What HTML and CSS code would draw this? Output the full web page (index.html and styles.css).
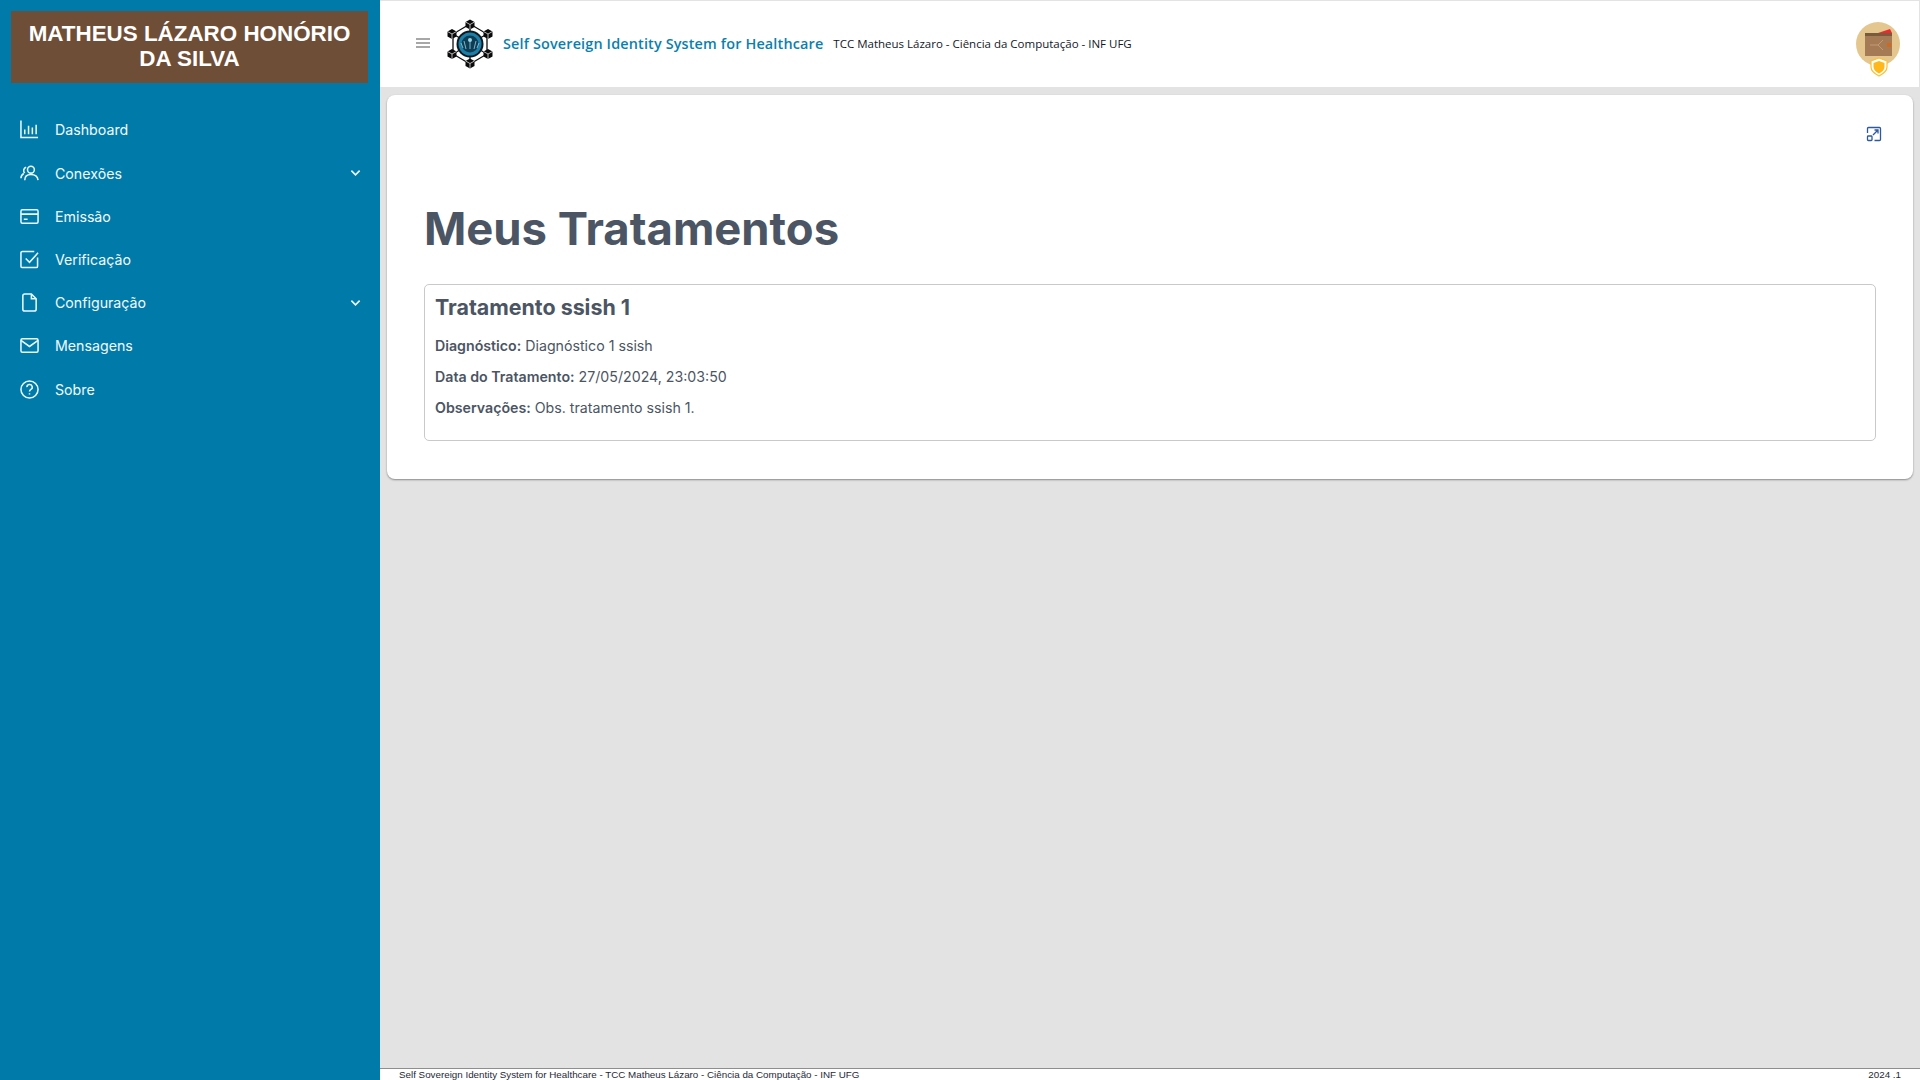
FILE: index.html
```html
<!DOCTYPE html>
<html lang="pt-BR">
<head>
<meta charset="utf-8">
<title>Meus Tratamentos</title>
<link rel="stylesheet" href="styles.css">
</head>
<body>
<div class="app">
  <aside class="sidebar">
    <div class="brand">MATHEUS LÁZARO HONÓRIO DA SILVA</div>
    <nav class="menu">
      <a class="item">
        <svg class="ico" viewBox="0 0 20 20"><path d="M1 .5v18h18M5 15v-5M9 15V6M13 15v-7M17 15V5"/></svg>
        <span class="label">Dashboard</span>
      </a>
      <a class="item">
        <svg class="ico" viewBox="0 0 20 20"><circle cx="11.5" cy="6" r="3.6"/><path d="M5 17c0-4 2.500-6 6.500-6s7 2 7.500 6M6.500 3.500A3.500 3.500 0 0 0 5 9.500M1 15c0-2.500 1-4 3-5"/></svg>
        <span class="label">Conexões</span>
        <svg class="chev" viewBox="0 0 12 8"><path d="M1.500 1.500 6 6l4.500-4.500"/></svg>
      </a>
      <a class="item">
        <svg class="ico" viewBox="0 0 20 20"><rect x="1" y="3" width="18" height="14" rx="1.500"/><path d="M1 7.500h18M4 13h4"/></svg>
        <span class="label">Emissão</span>
      </a>
      <a class="item">
        <svg class="ico" viewBox="0 0 20 20"><path d="M18.500 8v9a1.500 1.500 0 0 1-1.500 1.500H2.500A1.500 1.500 0 0 1 1 17V3a1.500 1.500 0 0 1 1.500-1.500H15M6 9l4 4 9-10"/></svg>
        <span class="label">Verificação</span>
      </a>
      <a class="item">
        <svg class="ico" viewBox="0 0 20 20"><path d="M3 3a2 2 0 0 1 2-2h7l5 5v11a2 2 0 0 1-2 2H5a2 2 0 0 1-2-2zM12 1v5h5"/></svg>
        <span class="label">Configuração</span>
        <svg class="chev" viewBox="0 0 12 8"><path d="M1.500 1.500 6 6l4.500-4.500"/></svg>
      </a>
      <a class="item">
        <svg class="ico" viewBox="0 0 20 20"><rect x="1" y="3" width="18" height="14" rx="1.500"/><path d="m1 4.500 9 6.500 9-6.500"/></svg>
        <span class="label">Mensagens</span>
      </a>
      <a class="item">
        <svg class="ico" viewBox="0 0 20 20"><circle cx="10" cy="10" r="9"/><path d="M7.300 7.500a2.800 2.800 0 1 1 4.200 2.400c-1 .6-1.500 1.100-1.500 2.100M10 14v1.300"/></svg>
        <span class="label">Sobre</span>
      </a>
    </nav>
  </aside>
  <div class="main">
    <header class="topbar">
      <svg class="burger" viewBox="0 0 14 10"><path d="M0 1h14M0 5h14M0 9h14"/></svg>
      <svg class="logo" viewBox="0 0 48 50">
        <path class="net" d="M24 5 41 15V35L24 45 7 35V15Z"/>
        <path class="net" d="M24 5V12M41 15 35 18.500M41 35 35 31.500M24 45V38M7 35 13 31.500M7 15 13 18.500"/>
        <g class="nodes">
          <path d="M24 .5 28.500 3V8L24 10.500 19.500 8V3Z"/>
          <path d="M42 10 46.500 12.500V17.500L42 20 37.500 17.500V12.500Z"/>
          <path d="M42 30 46.500 32.500V37.500L42 40 37.500 37.500V32.500Z"/>
          <path d="M24 39.500 28.500 42V47L24 49.500 19.500 47V42Z"/>
          <path d="M6 30 10.500 32.500V37.500L6 40 1.500 37.500V32.500Z"/>
          <path d="M6 10 10.500 12.500V17.500L6 20 1.500 17.500V12.500Z"/>
        </g>
        <path class="cube" d="M19.500 3 24 5.500 28.500 3M24 5.500V10M37.500 12.500 42 15 46.500 12.500M42 15V20M37.500 32.500 42 35 46.500 32.500M42 35V40M19.500 42 24 44.500 28.500 42M24 44.500V49M1.500 32.500 6 35 10.500 32.500M6 35V40M1.500 12.500 6 15 10.500 12.500M6 15V20"/>
        <circle cx="24" cy="25" r="13.500" fill="#10181f"/>
        <circle cx="24" cy="25" r="11.500" fill="#1c7fa8"/>
        <circle cx="24" cy="25" r="8.500" fill="#0d3d55"/>
        <path class="rays" d="M24 30V20M20 30l-2-8M28 30l2-8M17 29l-2-5M31 29l2-5"/>
        <circle cx="24" cy="21" r="2" fill="#9ad3e6"/>
      </svg>
      <span class="app-name">Self Sovereign Identity System for Healthcare</span>
      <span class="app-sub">TCC Matheus Lázaro - Ciência da Computação - INF UFG</span>
      <span class="avatar">
        <svg viewBox="0 0 46 56">
          <circle cx="23" cy="23" r="22" fill="#e3c78f"/>
          <path d="M23 12 35 8 37 12Z" fill="#f0282d"/>
          <rect x="10" y="12" width="27" height="23" fill="#a47b55"/>
          <rect x="10" y="12" width="27" height="3" fill="#7a5a3c"/>
          <rect x="32" y="22" width="4" height="4" fill="#d0681e"/>
          <path d="M15 24h8l5-5M23 24l5 5" stroke="#c19a72" fill="none"/>
          <path d="M24 37 32 40V46C32 50 28 53 24 55 20 53 16 50 16 46V40Z" fill="#fff" stroke="#ffc02e" stroke-width="1.200"/>
          <path d="M24 40 29.500 42V46C29.500 49 27 51 24 52.500 21 51 18.500 49 18.500 46V42Z" fill="#ffb81c"/>
        </svg>
      </span>
    </header>
    <main class="content">
      <section class="card">
        <div class="card-tools">
          <svg class="expand" viewBox="0 0 16 16"><path d="M1.500 7V2.500a1 1 0 0 1 1-1h11a1 1 0 0 1 1 1v11a1 1 0 0 1-1 1H8.500"/><rect x="1.500" y="10" width="4.500" height="4.500" rx=".8"/><path d="m7 9 5-5M8.500 4H12v3.500"/></svg>
        </div>
        <h1 class="title">Meus Tratamentos</h1>
        <article class="treatment">
          <h2 class="treatment-title">Tratamento ssish 1</h2>
          <p class="line"><strong>Diagnóstico:</strong> Diagnóstico 1 ssish</p>
          <p class="line"><strong>Data do Tratamento:</strong> 27/05/2024, 23:03:50</p>
          <p class="line"><strong>Observações:</strong> Obs. tratamento ssish 1.</p>
        </article>
      </section>
    </main>
    <footer class="footer">
      <span>Self Sovereign Identity System for Healthcare - TCC Matheus Lázaro - Ciência da Computação - INF UFG</span>
      <span>2024 .1</span>
    </footer>
  </div>
</div>
</body>
</html>
```
FILE: styles.css
```css
* { box-sizing: border-box; }
html, body { margin: 0; height: 100%; }
body { font-family: Inter, "Liberation Sans", sans-serif; background: #e3e3e3; color: #4b5563; overflow: hidden; }
.app { display: flex; height: 1080px; }

.sidebar { width: 380px; flex: none; background: #007aa9; padding: 11px 12px 0 11px; color: #f2fbff; }
.brand { height: 72px; background: #6f4e37; color: #fff; font: 700 22.400px/25px "Liberation Sans", sans-serif; text-align: center; padding: 10px 8px 0; }
.menu { display: flex; flex-direction: column; margin-top: 25.300px; }
.item { display: flex; align-items: center; height: 43.200px; padding: 0 7px 0 9px; font-size: 14.200px; }
.ico { width: 19px; height: 19px; flex: none; fill: none; stroke: #eafaff; stroke-width: 1.600; }
.label { margin-left: 16px; flex: 1; }
.chev { width: 11px; height: 8px; fill: none; stroke: #f2fbff; stroke-width: 1.800; }

.main { flex: 1; min-width: 0; display: flex; flex-direction: column; }
.topbar { height: 86px; margin: 1px 1px 0 0; background: #fff; display: flex; align-items: center; padding: 0 18px 0 36px; flex: none; }
.burger { width: 14px; height: 10px; margin-bottom: 2px; fill: none; stroke: #8a8a8a; stroke-width: 1.300; }
.logo { width: 48px; height: 50px; margin-left: 16px; }
.net { fill: none; stroke: #111; stroke-width: 1.300; }
.nodes { fill: #0a0a0a; }
.cube { fill: none; stroke: #fff; stroke-width: .7; }
.rays { fill: none; stroke: #9ad3e6; stroke-width: .8; }
.app-name { margin: 0 0 2px 9px; font: 600 14.400px "Open Sans", sans-serif; letter-spacing: .16px; color: #0a7fae; }
.app-sub { margin: 0 0 2px 10px; font: 400 11.500px "Open Sans", sans-serif; color: #111827; }
.avatar { margin-left: auto; width: 46px; height: 56px; display: block; margin-top: 10px; }
.avatar svg { display: block; width: 46px; height: 56px; }

.content { flex: 1; padding: 8px 7px 0 7px; min-height: 0; }
.card { position: relative; height: 384px; background: #fff; border-radius: 8px; box-shadow: 0 1px 2px rgba(0,0,0,.4); padding: 105px 37px 0; }
.card-tools { position: absolute; top: 31px; right: 31px; }
.expand { display: block; width: 16px; height: 16px; fill: none; stroke: #2e5a9c; stroke-width: 1.300; }
.title { margin: 0; font-size: 45.400px; line-height: 58px; font-weight: 700; color: #4b5563; }
.treatment { margin-top: 26px; height: 157px; border: 1px solid #c9c9c9; border-radius: 5px; padding: 9px 10px; }
.treatment-title { margin: 0 0 9px; font-size: 21.400px; line-height: 27px; font-weight: 700; color: #4b5563; }
.line { margin: 0; font-size: 14.200px; line-height: 31px; }
.line strong { font-weight: 600; }

.footer { height: 12px; flex: none; background: #fff; border-top: 1px solid #8e8e8e; display: flex; justify-content: space-between; padding: 0 19px 0 19px; font: 9.800px/11px "Liberation Sans", sans-serif; color: #1f2937; white-space: nowrap; }
```
